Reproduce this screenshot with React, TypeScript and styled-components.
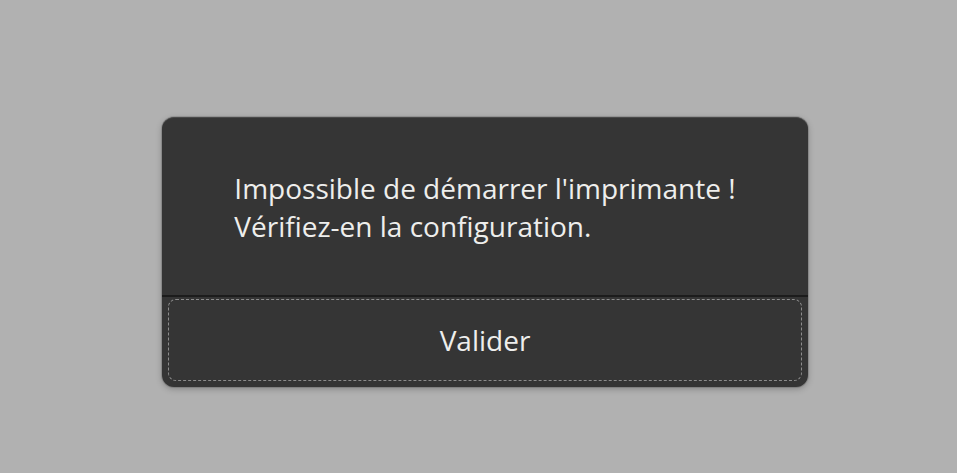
import React from 'react';
import styled, { createGlobalStyle } from 'styled-components';

const GlobalStyle = createGlobalStyle`
  html, body {
    margin: 0;
    padding: 0;
    background: #b1b1b1;
    font-family: "Open Sans", "Noto Sans", sans-serif;
  }
`;

const Page = styled.div`
  width: 957px;
  height: 473px;
  box-sizing: border-box;
  padding: 117px 0 0 162px;
`;

const Dialog = styled.div`
  width: 646px;
  box-sizing: border-box;
  background: #353535;
  border-radius: 12px;
  border-top: 1px solid #4a4a4a;
  box-shadow: 0 0 0 1px rgba(0, 0, 0, 0.12), 0 2px 6px rgba(0, 0, 0, 0.25);
  display: flex;
  flex-direction: column;
  overflow: hidden;
`;

const Message = styled.div`
  height: 177px;
  display: flex;
  align-items: center;
  justify-content: center;
  border-bottom: 2px solid #1c1c1c;
`;

const Text = styled.p`
  margin: 0;
  color: #eeeeec;
  font-size: 28px;
  line-height: 38px;
  text-align: left;
`;

const ButtonArea = styled.div`
  height: 90px;
  box-sizing: border-box;
  padding: 2px 6px 6px 6px;
  display: flex;
`;

const Button = styled.button`
  flex: 1;
  background: transparent;
  border: 1px dashed #8c8c8c;
  border-radius: 8px;
  color: #eeeeec;
  font-family: inherit;
  font-size: 28px;
  cursor: pointer;
  padding: 0;
`;

export default function App() {
  return (
    <>
      <GlobalStyle />
      <Page>
        <Dialog>
          <Message>
            <Text>
              Impossible de démarrer l'imprimante !
              <br />
              Vérifiez-en la configuration.
            </Text>
          </Message>
          <ButtonArea>
            <Button>Valider</Button>
          </ButtonArea>
        </Dialog>
      </Page>
    </>
  );
}
